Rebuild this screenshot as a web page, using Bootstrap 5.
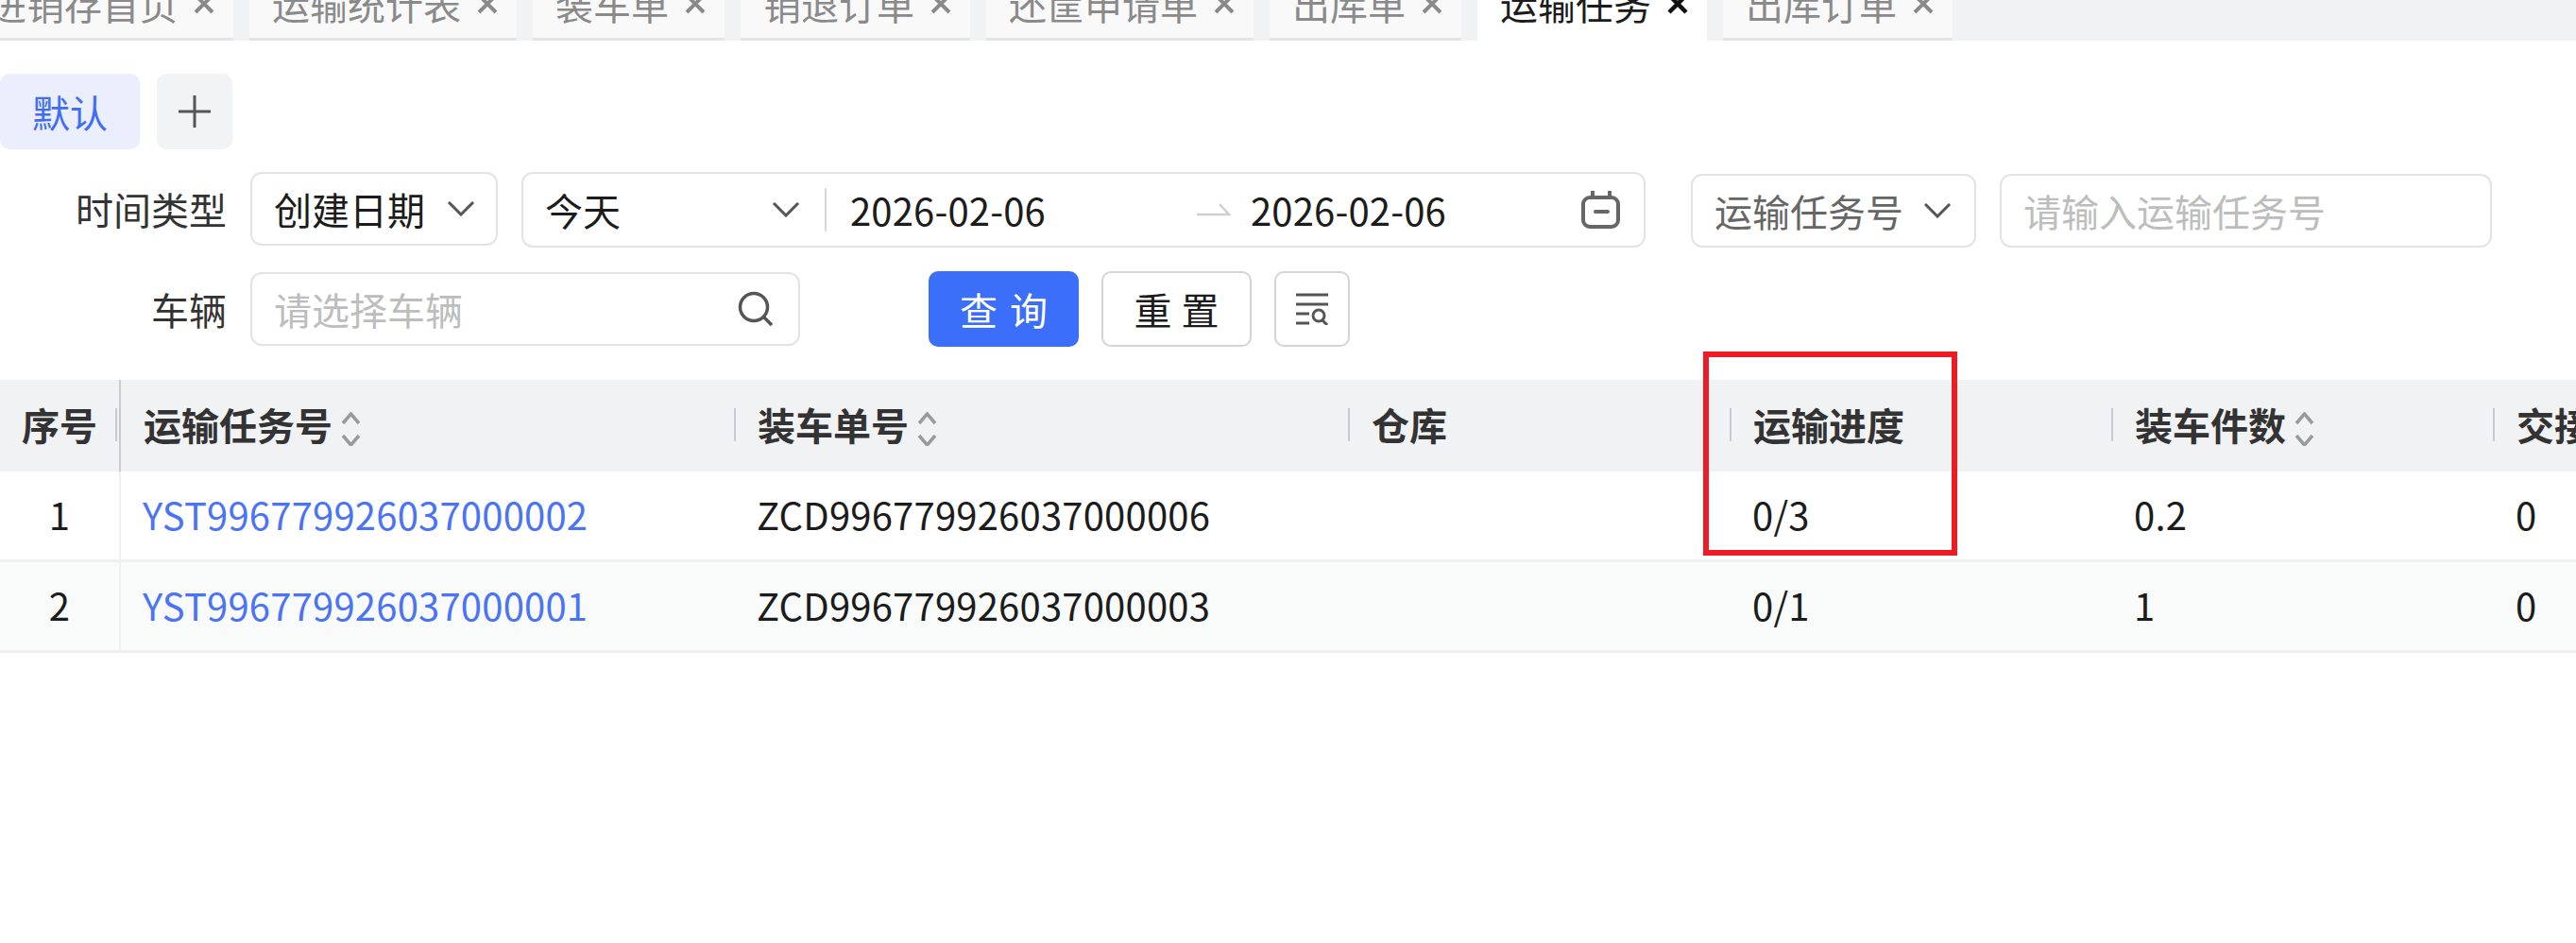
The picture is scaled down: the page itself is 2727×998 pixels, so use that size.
<!doctype html>
<html lang="zh-CN">

<head>
    <meta charset="utf-8">
    <meta name="viewport" content="width=device-width, initial-scale=1">
    <link href="https://cdn.jsdelivr.net/npm/bootstrap@5.3.3/dist/css/bootstrap.min.css" rel="stylesheet">
    <title>运输任务</title>
    <style>
        body {
            font-family: "Noto Sans CJK SC", "Noto Sans", sans-serif;
            font-size: 40px;
            line-height: 1.2;
            color: #1c1c1c;
            background: #fff;
            width: 2727px;
            height: 998px;
            overflow: hidden;
        }

        .tab-strip {
            height: 43px;
            overflow: hidden;
            background: #f1f2f4;
            gap: 17px;
        }

        .tab-item {
            flex: none;
            height: 76px;
            padding: 0 20px 0 24px;
            gap: 17px;
            background: #f9f9f9;
            border-bottom: 3px solid #e4e4e4;
            color: #8a8a8a;
        }

        .tab-item:first-child {
            margin-left: -36px;
        }

        .tab-item.is-on {
            background: #fff;
            border-bottom-color: #fff;
            color: #1c1c1c;
        }

        .tab-close {
            width: 22px;
            height: 22px;
        }

        .view-row {
            margin-top: 35px;
            gap: 18px;
        }

        .view-tab {
            width: 148px;
            height: 80px;
            border-radius: 10px;
            background: #eaeefd;
            color: #3f6df6;
        }

        .view-add {
            width: 80px;
            height: 80px;
            border-radius: 10px;
            background: #f2f3f5;
        }

        .filter-row {
            padding-left: 265px;
            height: 80px;
        }

        .filter-one {
            margin-top: 24px;
        }

        .filter-two {
            margin-top: 25px;
        }

        .filter-label {
            position: absolute;
            right: calc(100% + 27px);
            white-space: nowrap;
            color: #333;
        }

        .box {
            height: 78px;
            flex: none;
            border: 2px solid #e2e3e5;
            border-radius: 12px;
            background: #fff;
        }

        .box-type {
            width: 262px;
            padding: 0 22px 0 23px;
        }

        .box-range {
            width: 1190px;
            height: 80px;
            margin-left: 25px;
            padding: 0 24px 0 23px;
        }

        .box-no {
            width: 302px;
            margin-left: 48px;
            margin-top: 2px;
            padding: 0 24px 0 23px;
            color: #666;
        }

        .box-input {
            width: 521px;
            margin-left: 25px;
            margin-top: 2px;
            padding: 0 23px;
        }

        .box-car {
            width: 582px;
            padding: 0 26px 0 23px;
        }

        .box input {
            border: 0;
            outline: 0;
            padding: 0;
            width: 100%;
            font-size: 40px;
            color: #1c1c1c;
            background: transparent;
        }

        .box input::placeholder {
            color: #bdbdbd;
        }

        .ico-chev {
            width: 30px;
            height: 16px;
            flex: none;
        }

        .range-pick {
            width: 270px;
            flex: none;
        }

        .range-sep {
            width: 2px;
            height: 46px;
            background: #d9d9d9;
            margin: 0 25px 0 26px;
            flex: none;
        }

        .date-val {
            flex: none;
            letter-spacing: .15px;
        }

        .date-from {
            width: 367px;
        }

        .ico-arrow {
            width: 36px;
            height: 14px;
            margin-right: 21px;
            flex: none;
        }

        .ico-cal {
            width: 42px;
            height: 40px;
            flex: none;
        }

        .btn.btn-query,
        .btn.btn-reset,
        .btn.btn-tool {
            height: 80px;
            padding: 0;
            font-size: 40px;
            border-radius: 10px;
            line-height: 1.2;
        }

        .btn.btn-query {
            width: 159px;
            margin-left: 136px;
            letter-spacing: 13px;
            text-indent: 13px;
            background: #3b6ef9;
            border: 0;
            color: #fff;
        }

        .btn.btn-reset {
            width: 159px;
            margin-left: 24px;
            letter-spacing: 10px;
            text-indent: 10px;
            background: #fff;
            border: 2px solid #d4d4d4;
            color: #1c1c1c;
        }

        .btn.btn-tool {
            width: 80px;
            margin-left: 24px;
            background: #fff;
            border: 2px solid #d4d4d4;
        }

        .grid-wrap {
            margin-top: 35px;
            overflow: hidden;
        }

        .grid-table {
            table-layout: fixed;
            width: 3044px;
            margin: 0;
            --bs-table-bg: transparent;
            --bs-table-color: #1c1c1c;
            border-collapse: separate;
            border-spacing: 0;
        }

        .grid-table th,
        .grid-table td {
            padding: 0 24px 3px;
            vertical-align: middle;
            white-space: nowrap;
            position: relative;
            border: 0;
        }

        .grid-table td {
            padding-left: 23px;
            letter-spacing: .2px;
        }

        .grid-table thead th {
            height: 97px;
            background: #f1f2f4;
            font-weight: 700;
            color: #333;
        }

        .grid-table thead th+th::before {
            content: "";
            position: absolute;
            left: -1px;
            top: 30px;
            height: 35px;
            width: 2px;
            background: #c9cbcf;
        }

        .grid-table tbody td {
            height: 96px;
            border-bottom: 3px solid #eeeff0;
        }

        .grid-table tbody tr:nth-child(2) td {
            background: #f9fafa;
        }

        .grid-table .col-seq {
            text-align: center;
            padding-left: 0;
            padding-right: 0;
            border-right: 2px solid #eeeff0;
        }

        .grid-table thead .col-seq {
            border-right-color: #c9cbcf;
        }

        .grid-table thead .col-seq::after {
            content: "";
            position: absolute;
            right: 2px;
            top: 30px;
            height: 35px;
            width: 2px;
            background: #c9cbcf;
        }

        .grid-table thead th.col-seq+th::before {
            display: none;
        }

        .grid-table a {
            color: #4a74f5;
            text-decoration: none;
        }

        .ico-sort {
            width: 21px;
            height: 36px;
            margin-left: 9px;
            vertical-align: -6px;
        }

        .mark-box {
            position: absolute;
            left: 1803px;
            top: 372px;
            width: 269px;
            height: 216px;
            border: 6px solid #ed1c24;
            pointer-events: none;
        }
    </style>
</head>

<body>
    <div class="tab-strip d-flex align-items-end">
        <div class="tab-item d-flex align-items-center">进销存首页<svg class="tab-close" viewBox="0 0 22 22"><path d="M2 2 20 20M20 2 2 20" stroke="#8a8a8a" stroke-width="4"/></svg></div>
        <div class="tab-item d-flex align-items-center">运输统计表<svg class="tab-close" viewBox="0 0 22 22"><path d="M2 2 20 20M20 2 2 20" stroke="#8a8a8a" stroke-width="4"/></svg></div>
        <div class="tab-item d-flex align-items-center">装车单<svg class="tab-close" viewBox="0 0 22 22"><path d="M2 2 20 20M20 2 2 20" stroke="#8a8a8a" stroke-width="4"/></svg></div>
        <div class="tab-item d-flex align-items-center">销退订单<svg class="tab-close" viewBox="0 0 22 22"><path d="M2 2 20 20M20 2 2 20" stroke="#8a8a8a" stroke-width="4"/></svg></div>
        <div class="tab-item d-flex align-items-center">还筐申请单<svg class="tab-close" viewBox="0 0 22 22"><path d="M2 2 20 20M20 2 2 20" stroke="#8a8a8a" stroke-width="4"/></svg></div>
        <div class="tab-item d-flex align-items-center">出库单<svg class="tab-close" viewBox="0 0 22 22"><path d="M2 2 20 20M20 2 2 20" stroke="#8a8a8a" stroke-width="4"/></svg></div>
        <div class="tab-item is-on d-flex align-items-center">运输任务<svg class="tab-close" viewBox="0 0 22 22"><path d="M2 2 20 20M20 2 2 20" stroke="#111" stroke-width="4.500"/></svg></div>
        <div class="tab-item d-flex align-items-center">出库订单<svg class="tab-close" viewBox="0 0 22 22"><path d="M2 2 20 20M20 2 2 20" stroke="#8a8a8a" stroke-width="4"/></svg></div>
    </div>

    <div class="view-row d-flex">
        <div class="view-tab d-flex align-items-center justify-content-center">默认</div>
        <div class="view-add d-flex align-items-center justify-content-center">
            <svg width="36" height="36" viewBox="0 0 36 36"><path d="M18 1V35M1 18H35" stroke="#555" stroke-width="3"/></svg>
        </div>
    </div>

    <div class="filter-row filter-one d-flex align-items-start">
        <div class="box box-type d-flex align-items-center justify-content-between position-relative">
            <span class="filter-label">时间类型</span>
            <span>创建日期</span>
            <svg class="ico-chev" viewBox="0 0 30 16"><path d="M2 1 15 14 28 1" fill="none" stroke="#555" stroke-width="3"/></svg>
        </div>
        <div class="box box-range d-flex align-items-center">
            <div class="range-pick d-flex align-items-center justify-content-between">
                <span>今天</span>
                <svg class="ico-chev" viewBox="0 0 30 16"><path d="M2 1 15 14 28 1" fill="none" stroke="#555" stroke-width="3"/></svg>
            </div>
            <div class="range-sep"></div>
            <span class="date-val date-from">2026-02-06</span>
            <svg class="ico-arrow" viewBox="0 0 36 14"><path d="M0 12H34L24 1" fill="none" stroke="#cfcfcf" stroke-width="2.500"/></svg>
            <span class="date-val">2026-02-06</span>
            <svg class="ico-cal ms-auto" viewBox="0 0 42 40"><rect x="2" y="7" width="37" height="31" rx="7" fill="none" stroke="#666" stroke-width="4"/><path d="M12 0V8M30 0V8" stroke="#666" stroke-width="4"/><path d="M15 22H28" stroke="#666" stroke-width="4" stroke-linecap="round"/></svg>
        </div>
        <div class="box box-no d-flex align-items-center justify-content-between">
            <span>运输任务号</span>
            <svg class="ico-chev" viewBox="0 0 30 16"><path d="M2 1 15 14 28 1" fill="none" stroke="#555" stroke-width="3"/></svg>
        </div>
        <div class="box box-input d-flex align-items-center">
            <input type="text" placeholder="请输入运输任务号">
        </div>
    </div>

    <div class="filter-row filter-two d-flex align-items-center">
        <div class="box box-car d-flex align-items-center position-relative">
            <span class="filter-label">车辆</span>
            <input type="text" placeholder="请选择车辆">
            <svg class="flex-shrink-0" width="38" height="38" viewBox="0 0 38 38"><circle cx="17" cy="17" r="14.500" fill="none" stroke="#555" stroke-width="3.500"/><path d="M27 27 36 36" stroke="#555" stroke-width="3.500"/></svg>
        </div>
        <button type="button" class="btn btn-query">查询</button>
        <button type="button" class="btn btn-reset">重置</button>
        <button type="button" class="btn btn-tool d-flex align-items-center justify-content-center">
            <svg width="36" height="34" viewBox="0 0 36 34"><path d="M1 2H35M1 12H35M1 22H15M1 32H15" stroke="#555" stroke-width="3"/><circle cx="25" cy="24" r="6" fill="none" stroke="#555" stroke-width="3"/><path d="M29 29 34 34" stroke="#555" stroke-width="3"/></svg>
        </button>
    </div>

    <div class="grid-wrap">
        <table class="table grid-table">
            <colgroup>
                <col style="width:128px">
                <col style="width:650px">
                <col style="width:650px">
                <col style="width:404px">
                <col style="width:404px">
                <col style="width:404px">
                <col style="width:404px">
            </colgroup>
            <thead>
                <tr>
                    <th class="col-seq">序号</th>
                    <th>运输任务号<svg class="ico-sort" viewBox="0 0 21 36"><path d="M2 12 10.500 2 19 12M2 25 10.500 35 19 25" fill="none" stroke="#9a9a9a" stroke-width="3.500"/></svg></th>
                    <th>装车单号<svg class="ico-sort" viewBox="0 0 21 36"><path d="M2 12 10.500 2 19 12M2 25 10.500 35 19 25" fill="none" stroke="#9a9a9a" stroke-width="3.500"/></svg></th>
                    <th>仓库</th>
                    <th>运输进度</th>
                    <th>装车件数<svg class="ico-sort" viewBox="0 0 21 36"><path d="M2 12 10.500 2 19 12M2 25 10.500 35 19 25" fill="none" stroke="#9a9a9a" stroke-width="3.500"/></svg></th>
                    <th>交接件数</th>
                </tr>
            </thead>
            <tbody>
                <tr>
                    <td class="col-seq">1</td>
                    <td><a href="#">YST996779926037000002</a></td>
                    <td>ZCD996779926037000006</td>
                    <td></td>
                    <td>0/3</td>
                    <td>0.2</td>
                    <td>0</td>
                </tr>
                <tr>
                    <td class="col-seq">2</td>
                    <td><a href="#">YST996779926037000001</a></td>
                    <td>ZCD996779926037000003</td>
                    <td></td>
                    <td>0/1</td>
                    <td>1</td>
                    <td>0</td>
                </tr>
            </tbody>
        </table>
    </div>

    <div class="mark-box"></div>
</body>

</html>
